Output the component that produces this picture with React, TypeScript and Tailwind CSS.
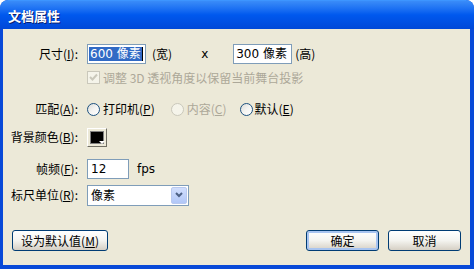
import React from "react";

const cjk = { fontFamily: '"Noto Sans CJK SC", "Liberation Sans", sans-serif' };
const latin = { fontFamily: 'Tahoma, "DejaVu Sans", "Noto Sans CJK SC", sans-serif' };

function Radio({ disabled = false }: { disabled?: boolean }) {
  return (
    <span
      className={
        "inline-block w-[13px] h-[13px] rounded-full border " +
        (disabled
          ? "border-[#CAC8BB] bg-[#F5F4EA]"
          : "border-[#1C5180] bg-gradient-to-br from-[#DCDCD7] via-[#F4F4F2] to-white")
      }
    />
  );
}

function Btn({ children, primary = false, w }: { children: React.ReactNode; primary?: boolean; w: string }) {
  return (
    <div
      className={
        "h-[21px] rounded-[3px] border border-[#003C74] flex items-center justify-center text-[12px] text-black whitespace-nowrap bg-gradient-to-b from-white via-[#F4F4F0] to-[#D6D0C5] " +
        w +
        (primary ? " shadow-[inset_0_0_0_2px_#A8C4F0]" : "")
      }
      style={cjk}
    >
      {children}
    </div>
  );
}

function Label({ children }: { children: React.ReactNode }) {
  return <div className="w-[70px] shrink-0 text-right leading-none whitespace-nowrap">{children}</div>;
}

export default function App() {
  return (
    <div className="w-[474px] h-[269px] bg-[#0849D8] rounded-t-[8px] flex flex-col overflow-hidden">
      {/* title bar */}
      <div className="h-[29px] shrink-0 rounded-t-[8px] bg-gradient-to-b from-[#3A8CF8] via-[#0058EE] to-[#0048D8] border-t border-[#3D95FF] flex items-center pl-[8px]">
        <span
          className="text-white font-bold text-[13px] leading-none [text-shadow:1px_1px_0_#0A1E6E]"
          style={cjk}
        >
          文档属性
        </span>
      </div>

      {/* body */}
      <div className="flex-1 ml-[3px] mr-[4px] mb-[4px] bg-[#ECE9D8] pl-[5px] pr-[9px] pt-[15px] flex flex-col text-[12px] text-black" style={cjk}>
        {/* size */}
        <div className="flex items-center h-[20px]">
          <Label>尺寸(<u>I</u>):</Label>
          <div className="ml-[9px] w-[59px] h-[20px] border border-[#7F9DB9] bg-white flex items-center pl-[1px] overflow-hidden">
            <span className="bg-[#316AC5] text-white leading-[14px] px-[1px] whitespace-nowrap" style={latin}>600 像素</span>
            <span className="w-[1px] h-[14px] bg-black shrink-0" />
          </div>
          <span className="ml-[6px] leading-none">(宽)</span>
          <span className="ml-[29px] leading-none" style={latin}>x</span>
          <div className="ml-[25px] w-[59px] h-[20px] border border-[#7F9DB9] bg-white flex items-center pl-[2px] overflow-hidden">
            <span className="leading-none whitespace-nowrap" style={latin}>300 像素</span>
          </div>
          <span className="ml-[3px] leading-none">(高)</span>
        </div>

        {/* 3d checkbox */}
        <div className="flex items-center h-[13px] mt-[7px] pl-[79px] text-[#ACA899]">
          <span className="w-[13px] h-[13px] border border-[#CAC8BB] bg-[#F5F4EA] flex items-center justify-center">
            <svg width="9" height="9" viewBox="0 0 9 9">
              <path d="M1 4 L3.5 6.5 L8 1.5" stroke="#CAC8BB" strokeWidth="2" fill="none" />
            </svg>
          </span>
          <span className="ml-[3px] leading-none">调整 3D 透视角度以保留当前舞台投影</span>
        </div>

        {/* match */}
        <div className="flex items-center h-[20px] mt-[15px]">
          <Label>匹配(<u>A</u>):</Label>
          <div className="ml-[9px] flex items-center">
            <Radio />
            <span className="ml-[3px] leading-none">打印机(<u>P</u>)</span>
          </div>
          <div className="ml-[16px] flex items-center text-[#ACA899]">
            <Radio disabled />
            <span className="ml-[3px] leading-none">内容(<u>C</u>)</span>
          </div>
          <div className="ml-[13px] flex items-center">
            <Radio />
            <span className="ml-[2px] leading-none">默认(<u>E</u>)</span>
          </div>
        </div>

        {/* bg color */}
        <div className="flex items-center h-[20px] mt-[8px]">
          <Label>背景颜色(<u>B</u>):</Label>
          <div className="ml-[9px] w-[20px] h-[19px] relative border border-t-white border-l-white border-r-[#716F64] border-b-[#716F64] bg-[#ECE9D8] p-[2px]">
            <div className="w-full h-full bg-black border border-[#808080]" />
            <svg className="absolute right-[1px] bottom-[1px]" width="6" height="4" viewBox="0 0 6 4">
              <path d="M0 0 H6 L3 3 Z" fill="#fff" />
            </svg>
          </div>
        </div>

        {/* fps */}
        <div className="flex items-center h-[20px] mt-[12px]">
          <Label>帧频(<u>F</u>):</Label>
          <div className="ml-[9px] w-[42px] h-[20px] border border-[#7F9DB9] bg-white flex items-center pl-[3px]">
            <span className="leading-none" style={latin}>12</span>
          </div>
          <span className="ml-[8px] leading-none" style={latin}>fps</span>
        </div>

        {/* ruler */}
        <div className="flex items-center h-[20px] mt-[6px]">
          <Label>标尺单位(<u>R</u>):</Label>
          <div className="ml-[9px] w-[102px] h-[21px] border border-[#7F9DB9] bg-white flex items-center pl-[3px] pr-[1px]">
            <span className="flex-1 leading-none">像素</span>
            <div className="w-[16px] h-[17px] rounded-[2px] border border-[#B9C9EF] bg-gradient-to-b from-[#D1DEFD] to-[#B1C7F7] flex items-center justify-center">
              <svg width="8" height="6" viewBox="0 0 8 6">
                <path d="M1 1 L4 4 L7 1" stroke="#4D6185" strokeWidth="2" fill="none" />
              </svg>
            </div>
          </div>
        </div>

        {/* buttons */}
        <div className="flex items-center mt-[25px] pl-[4px]">
          <Btn w="w-[96px]">设为默认值(<u>M</u>)</Btn>
          <div className="flex-1" />
          <Btn w="w-[73px]" primary>确定</Btn>
          <div className="ml-[9px]">
            <Btn w="w-[73px]">取消</Btn>
          </div>
        </div>
      </div>
    </div>
  );
}
